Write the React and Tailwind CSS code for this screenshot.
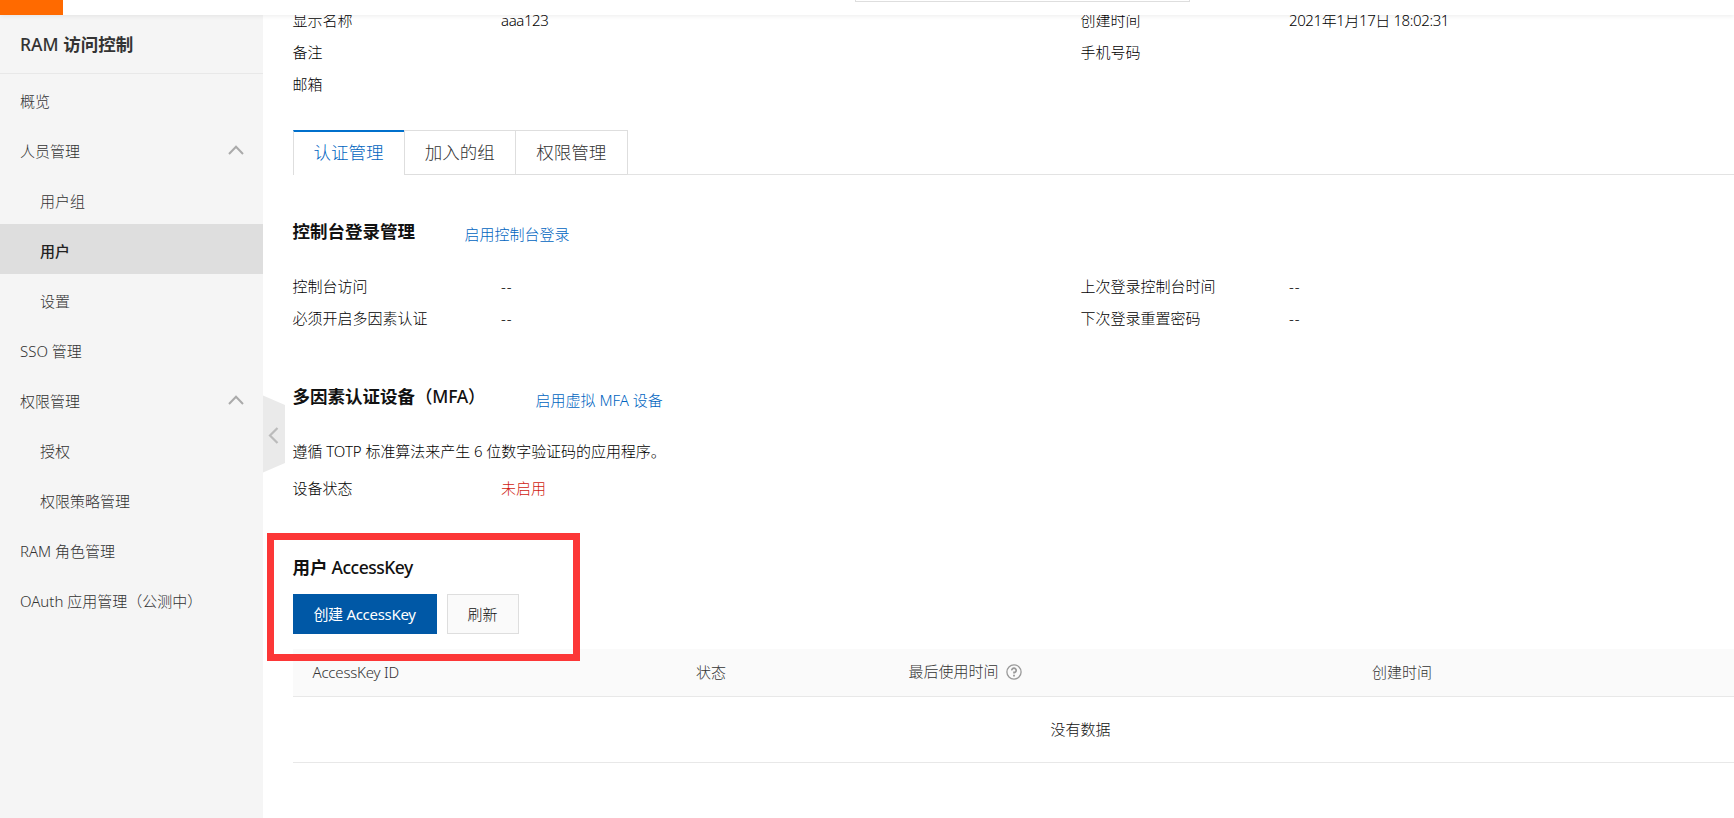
import React from "react";

const NAV = [
  { label: "概览" },
  { label: "人员管理", group: true },
  { label: "用户组", sub: true },
  { label: "用户", sub: true, active: true },
  { label: "设置", sub: true },
  { label: "SSO 管理" },
  { label: "权限管理", group: true },
  { label: "授权", sub: true },
  { label: "权限策略管理", sub: true },
  { label: "RAM 角色管理" },
  { label: "OAuth 应用管理（公测中）" },
];

function ChevronUp() {
  return (
    <svg className="-mt-[2px]" width="16" height="10" viewBox="0 0 16 10" fill="none" stroke="#aaa" strokeWidth="2">
      <path d="M1 9 L8 1.8 L15 9" />
    </svg>
  );
}

function Sidebar() {
  return (
    <aside className="w-[263px] shrink-0 bg-[#f5f5f5] text-[#333]">
      <div className="flex h-[59px] items-center border-b border-[#e8e8e8] pb-[1px] pl-5 text-[17.5px] text-[#333]">
        <span className="whitespace-pre font-medium">RAM </span>
        <span className="font-bold">访问控制</span>
      </div>
      <nav>
        {NAV.map((n) => (
          <div
            key={n.label}
            className={
              "flex h-[50px] items-center justify-between pr-[19.5px] pt-[3px] " +
              (n.sub ? "pl-10 " : "pl-5 ") +
              (n.active ? "bg-[#dedede] font-medium text-[#222]" : "")
            }
          >
            <span>{n.label}</span>
            {n.group && <ChevronUp />}
          </div>
        ))}
      </nav>
    </aside>
  );
}

function Row({ items }) {
  return (
    <div className="flex h-8">
      {items.map(([k, v]) => (
        <div key={k} className="flex h-8 w-[788px] shrink-0 items-center">
          <span className="w-[208.5px] shrink-0">{k}</span>
          <span className={v === "--" ? "pb-[1px] tracking-[1px]" : "tracking-[-0.4px]"}>{v}</span>
        </div>
      ))}
    </div>
  );
}

function Tabs() {
  const rest = ["加入的组", "权限管理"];
  return (
    <div className="mt-[30px] flex h-[45px] text-[17.5px] text-[#333]">
      <div className="flex w-[111px] items-center justify-center border-l border-t-2 border-l-[#dedede] border-t-[#0070cc] pb-[3px] text-[#0064c0]">
        认证管理
      </div>
      {rest.map((t) => (
        <div
          key={t}
          className="flex w-[111.5px] items-center justify-center border-y border-l border-[#dedede] pb-[1px]"
        >
          {t}
        </div>
      ))}
      <div className="grow border-b border-l border-b-[#e3e3e3] border-l-[#dedede]" />
    </div>
  );
}

function HelpIcon() {
  return (
    <svg className="mt-[1px]" width="16" height="16" viewBox="0 0 16 16" fill="none" stroke="#999" strokeWidth="1.3">
      <circle cx="8" cy="8" r="7.1" />
      <path d="M5.8 6.4 A2.2 2.1 0 1 1 8 8.4 V9.6" strokeWidth="1.7" />
      <path d="M8 10.8 V12.5" strokeWidth="1.8" />
    </svg>
  );
}

export default function App() {
  return (
    <div className="flex h-[818px] w-[1734px] flex-col overflow-hidden bg-white font-['Noto_Sans','Noto_Sans_CJK_SC',sans-serif] text-[15px] font-light leading-5 text-black">
      <header className="relative z-10 flex h-[15px] shrink-0 bg-white shadow-[0_1px_5px_rgba(0,0,0,0.08)]">
        <div className="w-[63px] bg-[#ff6a00]" />
        <div className="ml-[792px] h-0.5 w-[335px] border-x border-b border-[#dedede]" />
      </header>
      <div className="flex min-h-0 grow">
        <Sidebar />
        <main className="relative min-w-0 grow pl-[29.5px]">
          <svg className="absolute left-0 top-[380px]" width="22" height="78" viewBox="0 0 22 78">
            <path d="M0 0.5 L22 10 V68 L0 77.5 Z" fill="#eaeaea" />
            <path d="M14.5 33 L7 40.5 L14.5 48" fill="none" stroke="#bbb" strokeWidth="2.2" />
          </svg>

          <section className="-mt-[11px]">
            <Row items={[["显示名称", "aaa123"], ["创建时间", "2021年1月17日 18:02:31"]]} />
            <Row items={[["备注", ""], ["手机号码", ""]]} />
            <Row items={[["邮箱", ""]]} />
          </section>

          <Tabs />

          <section className="pt-[44px]">
            <div className="flex h-6 items-center">
              <h2 className="w-[172px] text-[17.5px] font-bold text-[#111]">控制台登录管理</h2>
              <a className="pt-1.5 text-[#0064c0]">启用控制台登录</a>
            </div>
            <div className="mt-[27px]">
              <Row items={[["控制台访问", "--"], ["上次登录控制台时间", "--"]]} />
              <Row items={[["必须开启多因素认证", "--"], ["下次登录重置密码", "--"]]} />
            </div>
          </section>

          <section className="pt-[50px]">
            <div className="flex h-6 items-center">
              <h2 className="w-[243px] text-[17.5px] font-bold text-[#111]">
                多因素认证设备<span className="font-medium tracking-[-0.2px]">（MFA）</span>
              </h2>
              <a className="pt-[7px] text-[#0064c0]">启用虚拟 MFA 设备</a>
            </div>
            <p className="mt-[33px] tracking-[-0.05px]">遵循 TOTP 标准算法来产生 6 位数字验证码的应用程序。</p>
            <div className="mt-[11px] flex h-8 items-center">
              <span className="w-[208.5px]">设备状态</span>
              <span className="text-[#d01a10]">未启用</span>
            </div>
          </section>

          <section className="relative pt-[52px]">
            <div className="absolute -left-[25.5px] top-[29px] z-10 h-[128px] w-[313px] border-[7px] border-[#fc3737]" />
            <h2 className="flex h-6 items-center pb-0.5 text-[17.5px] font-bold text-[#111]">
              用户<span className="whitespace-pre font-medium tracking-[-0.5px]"> AccessKey</span>
            </h2>
            <div className="mt-[14px] flex h-10 gap-[10px]">
              <button className="w-36 bg-[#0058a6] font-normal tracking-[-0.3px] text-white">创建 AccessKey</button>
              <button className="w-[72px] border border-[#dedede] bg-[#fafafa] text-[#111]">刷新</button>
            </div>
            <div className="mt-[15px] flex h-12 items-center border-b border-[#e8e8e8] bg-[#fafafa] pb-0.5 text-[#333]">
              <span className="w-[383.5px] shrink-0 pl-5 tracking-[-0.2px]">AccessKey ID</span>
              <span className="w-[212.5px] shrink-0 pl-5">状态</span>
              <span className="flex w-[463.5px] shrink-0 items-center gap-[7px] pl-5">
                <span className="pb-0.5">最后使用时间</span>
                <HelpIcon />
              </span>
              <span className="shrink-0 pl-5">创建时间</span>
            </div>
            <div className="flex h-[66px] items-center border-b border-[#e8e8e8] pb-0.5 text-[#111]">
              <span className="w-[1576px] shrink-0 text-center">没有数据</span>
            </div>
          </section>
        </main>
      </div>
    </div>
  );
}
